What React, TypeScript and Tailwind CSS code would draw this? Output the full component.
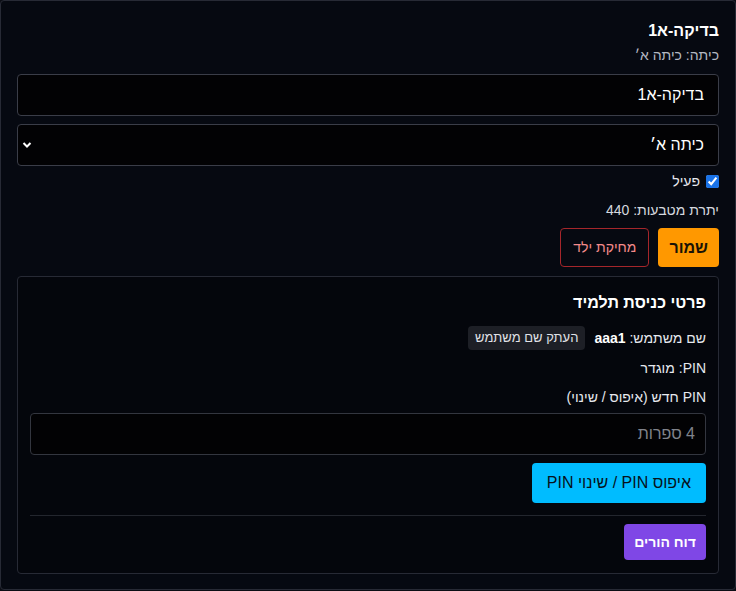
import { useState } from 'react'

export default function App() {
  const [active, setActive] = useState(true)

  return (
    <div
      dir="rtl"
      className="min-h-[591px] w-[736px] bg-[#0b0d14] text-[#e6e8ee]"
      style={{ fontFamily: '"Liberation Sans", "Noto Sans", sans-serif' }}
    >
      <div className="h-[590px] rounded-[4px] border border-[#272a35] bg-[#060911] px-4 pt-[19px]">
        <h2 className="text-[16px] font-bold leading-[22px] text-white">בדיקה-א1</h2>
        <div className="mt-[3px] text-[14px] leading-[20px] text-[#b4b8c2]">כיתה: כיתה א׳</div>

        <input
          defaultValue="בדיקה-א1"
          className="mt-[9px] block h-[42px] w-full rounded-[4px] border border-[#3a3d48] bg-[#020204] px-[14px] text-[16px] text-white outline-none"
        />

        <div className="relative mt-[8px]">
          <select className="block h-[42px] w-full appearance-none rounded-[4px] border border-[#3a3d48] bg-[#020204] px-[14px] text-[16px] text-white outline-none">
            <option>כיתה א׳</option>
          </select>
          <svg className="pointer-events-none absolute left-[5px] top-[16px] h-[10px] w-[10px]" viewBox="0 0 10 10">
            <path d="M1.5 3 L5 6.5 L8.5 3" fill="none" stroke="white" strokeWidth="2" />
          </svg>
        </div>

        <label className="mt-[7px] flex h-[16px] items-center gap-[6px] text-[14px]">
          <input
            type="checkbox"
            checked={active}
            onChange={(e) => setActive(e.target.checked)}
            className="h-[13px] w-[13px] accent-[#1a73e8]"
          />
          <span>פעיל</span>
        </label>

        <div className="mt-[12px] text-[14px] leading-[18px] text-[#d5d8df]">יתרת מטבעות: 440</div>

        <div className="mt-[9px] flex gap-[9px]">
          <button className="h-[39px] rounded-[4px] bg-[#ff9800] px-[11px] text-[16px] font-bold text-[#1a1306]">שמור</button>
          <button className="h-[39px] rounded-[4px] border border-[#a5262b] px-[12px] text-[14px] text-[#f48a8a]">מחיקת ילד</button>
        </div>

        <div className="mt-[9px] rounded-[4px] border border-[#272a35] bg-[#04060c] px-3 pb-[13px] pt-[15px]">
          <h3 className="text-[16px] font-bold leading-[22px] text-white">פרטי כניסת תלמיד</h3>

          <div className="mt-[12px] flex h-[24px] items-center gap-[9px] text-[14px]">
            <span>
              שם משתמש: <b className="font-bold text-white">aaa1</b>
            </span>
            <button className="h-[24px] rounded-[4px] bg-[#1d1f26] px-[7px] text-[13px] text-[#e0e2e8]">העתק שם משתמש</button>
          </div>

          <div className="mt-[9px] text-[14px] leading-[18px]">PIN: מוגדר</div>

          <div className="mt-[11px] text-[14px] leading-[18px]">PIN חדש (איפוס / שינוי)</div>

          <input
            placeholder="4 ספרות"
            className="mt-[7px] block h-[42px] w-full rounded-[4px] border border-[#33363f] bg-[#020204] px-[10px] text-[16px] text-white outline-none placeholder:text-[#80838b]"
          />

          <button className="mt-[8px] h-[40px] rounded-[4px] bg-[#00bcff] px-[15px] text-[16px] text-[#07121a]">איפוס PIN / שינוי PIN</button>

          <div className="mt-[12px] border-t border-[#23262e]" />

          <button className="mt-[8px] h-[36px] rounded-[4px] bg-[#7f47e6] px-[10px] text-[14px] font-bold text-white">דוח הורים</button>
        </div>
      </div>
    </div>
  )
}
